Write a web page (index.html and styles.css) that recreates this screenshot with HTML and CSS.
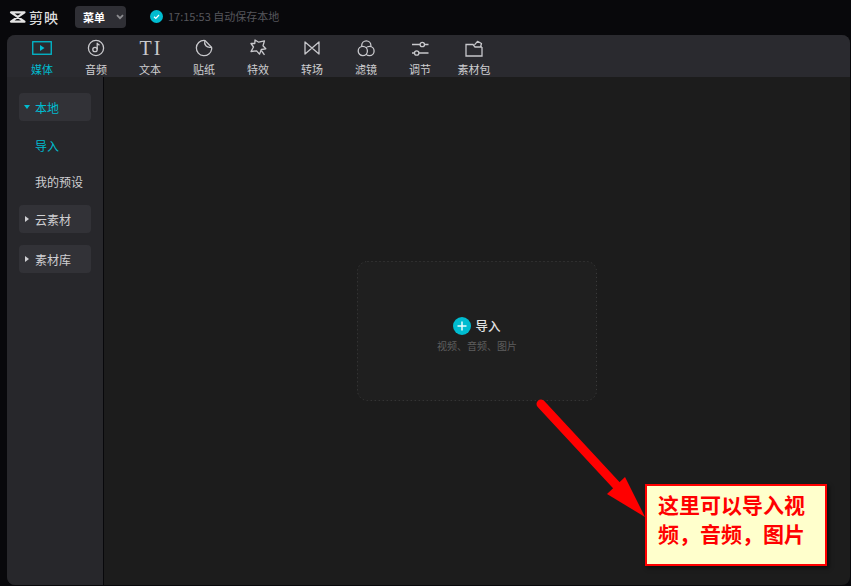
FILE: index.html
```html
<html>
<head>
  <meta http-equiv="Content-Type" content="text/html; charset=utf8">
  <title>剪映</title>
  <link rel="stylesheet" href="styles.css">
</head>
<body>
  <div class="top_bar">
    <div class="logo">
      <svg class="logo_icon" width="17" height="12" viewBox="0 0 17 12">
        <path d="M2 1.300H15.500L2 10.700H15.500Z" fill="none" stroke="#e4e4e4" stroke-width="2.200" stroke-linejoin="round"/>
      </svg>
      <span>剪映</span>
    </div>
    <div class="menu_btn">
      <span>菜单</span>
      <svg width="8" height="6" viewBox="0 0 8 6"><path d="M1 1.200 4 4.200 7 1.200" fill="none" stroke="#8c8c90" stroke-width="1.800"/></svg>
    </div>
    <div class="save_state">
      <svg width="13" height="13" viewBox="0 0 13 13">
        <circle cx="6.500" cy="6.500" r="6.500" fill="#00bcd0"/>
        <path d="M4 6.800 5.800 8.400 9 5" fill="none" stroke="#fff" stroke-width="1.200"/>
      </svg>
      <span>17:15:53 自动保存本地</span>
    </div>
  </div>

  <div class="panel">
    <div class="tool_bar">
      <div class="tool tool_on">
        <div class="tool_icon">
          <svg width="20" height="14" viewBox="0 0 20 14">
            <rect x="0.750" y="0.750" width="18.500" height="12.500" fill="none" stroke="#00bcd0" stroke-width="1.300"/>
            <path d="M8 4 12.500 7 8 10z" fill="#00bcd0"/>
          </svg>
        </div>
        <span>媒体</span>
      </div>
      <div class="tool">
        <div class="tool_icon">
          <svg width="18" height="18" viewBox="0 0 18 18" fill="none" stroke="#c8c8cc" stroke-width="1.300">
            <circle cx="9" cy="9" r="7.600"/>
            <circle cx="8" cy="10.500" r="2.200"/>
            <path d="M10.200 10.500V3.800c.2 1.200 1 1.900 2.300 2.200"/>
          </svg>
        </div>
        <span>音频</span>
      </div>
      <div class="tool">
        <div class="tool_icon"><span class="ti_glyph">TI</span></div>
        <span>文本</span>
      </div>
      <div class="tool">
        <div class="tool_icon">
          <svg width="18" height="18" viewBox="0 0 18 18" fill="none" stroke="#c8c8cc" stroke-width="1.300">
            <path d="M9 1.300A7.700 7.700 0 1 0 16.700 10c.1-.9 0-1.400-.3-1.900L10 1.500C9.600 1.300 9.300 1.300 9 1.300Z"/>
            <path d="M9.800 1.600C8.800 5.600 11.500 9.200 16.400 8.200"/>
          </svg>
        </div>
        <span>贴纸</span>
      </div>
      <div class="tool">
        <div class="tool_icon">
          <svg width="18" height="18" viewBox="0 0 18 18" fill="none" stroke="#c8c8cc" stroke-width="1.300" stroke-linejoin="round">
            <path d="M6 1 9.700 3.200 15.500 1.800 14 6.800 16.800 9.800 12.300 10.500 10.500 15.200 7.600 11.800 2 12.500 4.500 8 2 4.500 5.800 4.500Z"/>
            <path d="M12.300 11.500 15.500 15.800"/>
          </svg>
        </div>
        <span>特效</span>
      </div>
      <div class="tool">
        <div class="tool_icon">
          <svg width="16" height="14" viewBox="0 0 16 14" fill="none" stroke="#c8c8cc" stroke-width="1.300" stroke-linejoin="round">
            <path d="M1 1 8 7 15 1V13L8 7 1 13Z"/>
          </svg>
        </div>
        <span>转场</span>
      </div>
      <div class="tool">
        <div class="tool_icon">
          <svg width="18" height="17" viewBox="0 0 18 17" stroke="#c8c8cc" stroke-width="1.300" fill="#2a2a2f">
            <circle cx="9.300" cy="5.500" r="4.600"/>
            <circle cx="12.500" cy="11" r="4.600"/>
            <circle cx="5.800" cy="11" r="4.600"/>
          </svg>
        </div>
        <span>滤镜</span>
      </div>
      <div class="tool">
        <div class="tool_icon">
          <svg width="18" height="15" viewBox="0 0 18 15" fill="none" stroke="#c8c8cc" stroke-width="1.300">
            <path d="M1 3.500H9M13.500 3.500H17.500M1 12H3.500M8 12H17.500"/>
            <circle cx="11.300" cy="3.500" r="2.200"/>
            <circle cx="5.700" cy="12" r="2.200"/>
          </svg>
        </div>
        <span>调节</span>
      </div>
      <div class="tool">
        <div class="tool_icon">
          <svg width="18" height="17" viewBox="0 0 18 17" fill="none" stroke="#c8c8cc" stroke-width="1.300">
            <path d="M17 7V16H1V4.500H8L10 7H17"/>
            <path d="M9.500 4.800 12.500 1.300 16.500 3.500 15.500 7" stroke-linejoin="round"/>
          </svg>
        </div>
        <span>素材包</span>
      </div>
    </div>

    <div class="work_area">
      <div class="side_bar">
        <div class="side_group side_group_on"><i class="arrow_down"></i>本地</div>
        <div class="side_item side_item_on">导入</div>
        <div class="side_item">我的预设</div>
        <div class="side_group side_cloud"><i class="arrow_right"></i>云素材</div>
        <div class="side_group side_lib"><i class="arrow_right"></i>素材库</div>
      </div>
      <div class="main_area">
        <div class="import_box">
          <!-- dotted outline, finer than a css dotted border -->
          <svg class="import_edge" width="240" height="140" viewBox="0 0 240 140">
            <rect x="0.500" y="0.500" width="239" height="139" rx="10" fill="none" stroke="#3e3e3e" stroke-dasharray="1 3"/>
          </svg>
          <div class="import_title">
            <svg width="18" height="18" viewBox="0 0 18 18">
              <circle cx="9" cy="9" r="9" fill="#00bcd0"/>
              <path d="M9 4.500V13.500M4.500 9H13.500" stroke="#e8fbfd" stroke-width="1.500"/>
            </svg>
            <span>导入</span>
          </div>
          <div class="import_hint">视频、音频、图片</div>
        </div>
      </div>
    </div>
  </div>

  <!-- red pointer and note laid over the window -->
  <svg class="pointer" width="851" height="586" viewBox="0 0 851 586">
    <path d="M541 404 618 487" stroke="#ff0000" stroke-width="9" stroke-linecap="round" fill="none"/>
    <path d="M625 477 645 517 607 494Z" fill="#ff0000"/>
  </svg>
  <div class="note">这里可以导入视频，音频，图片</div>
</body>
</html>
```

FILE: styles.css
```css
html, body {
  margin: 0;
  padding: 0;
  height: 100%;
  overflow: hidden;
}
body {
  background-color: #08080b;
  color: #cfcfd2;
  font-family: "Noto Sans CJK SC", "Liberation Sans", sans-serif;
  font-size: 12px;
  display: flex;
  flex-direction: column;
}

.top_bar {
  height: 35px;
  flex: none;
  display: flex;
  align-items: center;
  padding-left: 9px;
}
.logo {
  display: flex;
  align-items: center;
  width: 66px;
  margin-top: -1px;
  color: #dcdcdc;
  font-size: 14px;
  font-weight: 500;
  letter-spacing: 1px;
}
.logo_icon {
  margin-right: 3px;
}
.menu_btn {
  width: 51px;
  height: 22px;
  margin-top: -1px;
  background-color: #2f2f35;
  border-radius: 4px;
  display: flex;
  align-items: center;
  justify-content: space-between;
  box-sizing: border-box;
  padding: 0 2px 0 8px;
  color: #ffffff;
  font-size: 11px;
  font-weight: bold;
}
.save_state {
  display: flex;
  align-items: center;
  margin-left: 24px;
  margin-top: -3px;
  color: #56565b;
  font-size: 11px;
}
.save_state svg {
  margin-right: 5px;
}

.panel {
  margin: 0 1px 1px 7px;
  flex: 1;
  display: flex;
  flex-direction: column;
  border-radius: 8px;
  overflow: hidden;
  background-color: #1c1c1c;
}
.tool_bar {
  height: 42px;
  flex: none;
  box-sizing: border-box;
  padding: 2px 0 0 8px;
  background-color: #2a2a2f;
  display: flex;
}
.tool {
  width: 54px;
  display: flex;
  flex-direction: column;
  align-items: center;
  font-size: 11px;
  line-height: 14px;
  color: #cfcfd2;
}
.tool_icon {
  height: 22px;
  margin-bottom: 3px;
  display: flex;
  align-items: center;
  justify-content: center;
}
.tool_on {
  color: #00bcd0;
}
.ti_glyph {
  font-family: "Liberation Serif", serif;
  font-size: 20px;
  line-height: 18px;
  letter-spacing: 2px;
  margin-right: -2px;
  color: #c8c8cc;
}

.work_area {
  flex: 1;
  display: flex;
  min-height: 0;
}
.side_bar {
  width: 97px;
  flex: none;
  box-sizing: border-box;
  padding: 16px 12px 0;
  background-color: #27272b;
  border-right: 1px solid #08080b;
}
.side_group {
  height: 28px;
  line-height: 29px;
  border-radius: 4px;
  background-color: #323237;
  padding-left: 16px;
  position: relative;
  color: #cfcfd2;
}
.side_group_on {
  color: #00bcd0;
  margin-bottom: 6px;
}
.side_cloud {
  margin-top: 6px;
}
.side_lib {
  margin-top: 12px;
}
.arrow_right {
  position: absolute;
  left: 6px;
  top: 11px;
  border-left: 4px solid #cfcfd2;
  border-top: 3px solid transparent;
  border-bottom: 3px solid transparent;
}
.arrow_down {
  position: absolute;
  left: 5px;
  top: 12px;
  border-top: 4px solid #00bcd0;
  border-left: 3px solid transparent;
  border-right: 3px solid transparent;
}
.side_item {
  height: 36px;
  line-height: 37px;
  padding-left: 16px;
}
.side_item_on {
  color: #00bcd0;
}

.main_area {
  flex: 1;
  box-sizing: border-box;
  padding: 184px 0 0 253px;
}
.import_box {
  width: 240px;
  height: 140px;
  box-sizing: border-box;
  border-radius: 10px;
  background-color: #1f1f1f;
  position: relative;
  display: flex;
  flex-direction: column;
  align-items: center;
  padding-top: 55px;
}
.import_edge {
  position: absolute;
  left: 0;
  top: 0;
}
.import_title {
  display: flex;
  align-items: center;
  height: 20px;
  color: #e4e4e4;
  font-size: 12.500px;
  line-height: 18px;
  font-weight: 500;
}
.import_title svg {
  margin-right: 4px;
}
.import_hint {
  margin-top: 2px;
  color: #5e5e5e;
  font-size: 10px;
  line-height: 16px;
}

.pointer {
  position: absolute;
  left: 0;
  top: 0;
}
.note {
  position: absolute;
  left: 645px;
  top: 484px;
  width: 182px;
  height: 82px;
  box-sizing: border-box;
  padding: 4px 11px 0;
  border: 2px solid #ff0000;
  background-color: #ffffcc;
  box-shadow: 2px 2px 4px rgba(0, 0, 0, 0.6);
  color: #ff0000;
  font-size: 21px;
  font-weight: bold;
  line-height: 29px;
}
```
